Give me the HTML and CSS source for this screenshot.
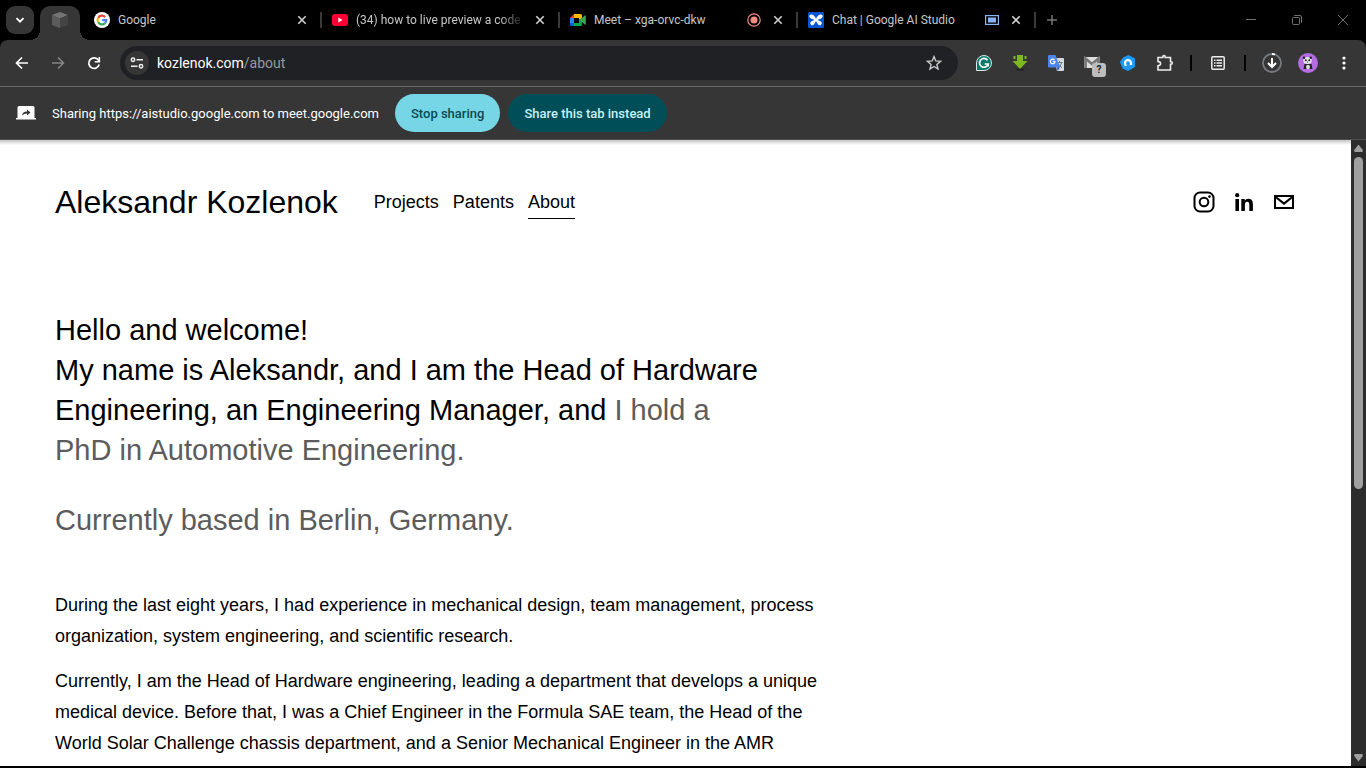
FILE: index.html
```html
<!DOCTYPE html>
<html lang="en">
<head>
<meta charset="utf-8">
<meta name="viewport" content="width=device-width, initial-scale=1">
<title>About — Aleksandr Kozlenok</title>
<link rel="stylesheet" href="styles.css">
</head>
<body class="window">
<div class="tabstrip">
  <button class="tab-search" aria-label="Search tabs"><svg width="12" height="12" viewBox="0 0 12 12"><path d="M2.500 4.200 6 7.700l3.500-3.500" fill="none" stroke="#fff" stroke-width="1.900"/></svg></button>
  <div class="tab-active"><svg width="16" height="16" viewBox="0 0 16 16"><path d="M8 0l8 3-8 3.500L0 3z" fill="#747474"/><path d="M0 3l8 3.500V16l-8-3z" fill="#5c5c5c"/><path d="M16 3L8 6.500V16l8-3z" fill="#444"/></svg></div>
  <div class="tab">
    <svg width="16" height="16" viewBox="0 0 16 16"><circle cx="8" cy="8" r="8" fill="#fff"/><g fill="none" stroke-width="2.200"><path d="M4.200 5.800A4.400 4.400 0 0 1 11.200 4.900" stroke="#ea4335"/><path d="M4.200 5.800a4.400 4.400 0 0 0 0 4.400" stroke="#fbbc05"/><path d="M4.200 10.200a4.400 4.400 0 0 0 6.600 1.200" stroke="#34a853"/><path d="M10.800 11.400A4.400 4.400 0 0 0 12.400 8.100H8.100" stroke="#4285f4"/></g></svg>
    <span class="tab-title">Google</span>
    <button class="tab-close" aria-label="Close tab"><svg width="10" height="10" viewBox="0 0 10 10"><path d="M1.300 1.300l7.400 7.400M8.700 1.300L1.300 8.700" stroke="#d0d0d0" stroke-width="1.600"/></svg></button>
  </div>
  <div class="tab">
    <svg width="16" height="16" viewBox="0 0 16 16"><rect y="2" width="16" height="12" rx="3" fill="#ff0033"/><path d="M6.300 5.500v5L10.600 8z" fill="#fff"/></svg>
    <span class="tab-title tab-title-fade">(34) how to live preview a code</span>
    <button class="tab-close" aria-label="Close tab"><svg width="10" height="10" viewBox="0 0 10 10"><path d="M1.300 1.300l7.400 7.400M8.700 1.300L1.300 8.700" stroke="#d0d0d0" stroke-width="1.600"/></svg></button>
  </div>
  <div class="tab">
    <svg width="16" height="16" viewBox="0 0 16 16"><path d="M0 6l4-4v4z" fill="#ea4335"/><path d="M0 6h4v5H0z" fill="#2684fc"/><path d="M0 11h4v3H1.200Q0 14 0 12.800z" fill="#0066da"/><path d="M4 2h6.500Q12 2 12 3.500V6L9 8V6H4z" fill="#ffba00"/><path d="M4 11h5V8l3-2.500v7Q12 14 10.500 14H4z" fill="#00ac47"/><path d="M12 6l3-2.700q.8-.4.8.5v8.400q0 .9-.8.500L12 10 9 8z" fill="#34a853"/></svg>
    <span class="tab-title">Meet – xga-orvc-dkw</span>
    <svg class="tab-state" width="14" height="14" viewBox="0 0 14 14"><circle cx="7" cy="7" r="6.200" fill="none" stroke="#f28b82" stroke-width="1.200"/><circle cx="7" cy="7" r="3.500" fill="#f28b82"/></svg>
    <button class="tab-close" aria-label="Close tab"><svg width="10" height="10" viewBox="0 0 10 10"><path d="M1.300 1.300l7.400 7.400M8.700 1.300L1.300 8.700" stroke="#d0d0d0" stroke-width="1.600"/></svg></button>
  </div>
  <div class="tab">
    <svg width="16" height="16" viewBox="0 0 16 16"><rect width="16" height="16" rx="1.500" fill="#0a56d0"/><g fill="#fff"><path d="M1.200 3.800Q3 1.600 5.500 3.200 7.500 4.600 8 7 8.500 4.600 10.500 3.200 13 1.600 14.800 3.800 14.500 6.500 11 7.300L9.500 8q2 .4 3.700 1.800a2 2 0 1 1-3 2.700Q9 11 8 9 7 11 5.800 12.500a2 2 0 1 1-3-2.700Q4.500 8.400 6.500 8L5 7.300Q1.500 6.500 1.200 3.800z"/></g></svg>
    <span class="tab-title">Chat | Google AI Studio</span>
    <svg class="tab-state" width="14" height="10" viewBox="0 0 14 10"><rect x=".6" y=".6" width="12.800" height="8.800" fill="none" stroke="#8ab4f8" stroke-width="1.200"/><rect x="3" y="2.500" width="8" height="5" fill="#8ab4f8"/></svg>
    <button class="tab-close" aria-label="Close tab"><svg width="10" height="10" viewBox="0 0 10 10"><path d="M1.300 1.300l7.400 7.400M8.700 1.300L1.300 8.700" stroke="#d0d0d0" stroke-width="1.600"/></svg></button>
  </div>
  <button class="new-tab" aria-label="New tab"><svg width="10" height="10" viewBox="0 0 10 10"><path d="M5 0v10M0 5h10" stroke="#777" stroke-width="1.500"/></svg></button>
  <div class="window-controls">
    <button aria-label="Minimize"><svg width="10" height="10" viewBox="0 0 10 10"><path d="M0 4.500h10" stroke="#707070"/></svg></button>
    <button aria-label="Restore"><svg width="10" height="10" viewBox="0 0 10 10"><path d="M2.500 1V.5h5.500q1.500 0 1.500 1.500v5.500H9" fill="none" stroke="#707070"/><rect x=".5" y="2.500" width="7" height="7" rx=".8" fill="none" stroke="#707070"/></svg></button>
    <button aria-label="Close"><svg width="10" height="10" viewBox="0 0 10 10"><path d="M0 0l10 10M10 0L0 10" stroke="#707070"/></svg></button>
  </div>
</div>

<div class="toolbar">
  <button class="tool" aria-label="Back"><svg width="14" height="14" viewBox="0 0 14 14"><path d="M13 7H2M7 1.500L1.500 7 7 12.500" fill="none" stroke="#fff" stroke-width="1.700"/></svg></button>
  <button class="tool" aria-label="Forward"><svg width="14" height="14" viewBox="0 0 14 14"><path d="M1 7h11M7 1.500L12.500 7 7 12.500" fill="none" stroke="#858585" stroke-width="1.500"/></svg></button>
  <button class="tool" aria-label="Reload"><svg width="14" height="14" viewBox="0 0 14 14"><path d="M12.200 8.500A5.300 5.300 0 1 1 11.400 4L12.800 5.500" fill="none" stroke="#fff" stroke-width="1.700"/><path d="M12.300 1v4.800H7.800" fill="none" stroke="#fff" stroke-width="1.600"/></svg></button>
  <div class="omnibox">
    <button class="site-info" aria-label="View site information"><svg width="14" height="12" viewBox="0 0 14 12"><g fill="none" stroke="#eee" stroke-width="1.500"><circle cx="3" cy="2.800" r="1.700"/><path d="M6.500 2.800H13M1 9.200h6.500"/><circle cx="11" cy="9.200" r="1.700"/></g></svg></button>
    <a class="address" href="#">kozlenok.com<span class="address-path">/about</span></a>
    <button class="bookmark" aria-label="Bookmark this tab"><svg width="16" height="16" viewBox="0 0 16 16"><path d="M8 1.600l1.800 4.300 4.700.4-3.600 3.100 1.100 4.600L8 11.500 4 14l1.100-4.600L1.500 6.300l4.700-.4z" fill="none" stroke="#ccc" stroke-width="1.400"/></svg></button>
  </div>
  <button class="tool" aria-label="Grammarly"><svg width="16" height="16" viewBox="0 0 16 16"><path d="M.5 15.500V8A7.500 7.500 0 1 1 8 15.500z" fill="#08786a" stroke="#d8e8e4"/><path d="M11.500 5.200A4.400 4.400 0 1 0 12.200 9H8.700M12.200 9v2.600" fill="none" stroke="#fff" stroke-width="1.700"/></svg></button>
  <button class="tool" aria-label="Downloader"><svg width="16" height="16" viewBox="0 0 16 16"><ellipse cx="8" cy="14.500" rx="4" ry="1.200" fill="#222"/><path d="M5 0h6v6h4.500L8 14 .5 6H5z" fill="#7db81e"/><path d="M1.500 1h2v3h-2zM12.500 1h2v3h-2z" fill="#7db81e"/></svg></button>
  <button class="tool" aria-label="Translate"><svg width="16" height="16" viewBox="0 0 16 16"><path d="M6 3h9q1 0 1 1v11q0 1-1 1H9z" fill="#d5d8dc"/><path d="M8.500 7.500h6M11.500 6v1.500M13.500 8q-1 4-4 5M10 8.500q1.500 3 4 4" fill="none" stroke="#607d8b" stroke-width="1"/><path d="M1 0h6.500l4.500 12.500H1q-1 0-1-1V1q0-1 1-1z" fill="#4a86ee"/><path d="M9 12.500h3L9.500 16z" fill="#2a56c6"/><path d="M6.500 5A2.300 2.300 0 1 0 7 6.700H4.900" fill="none" stroke="#fff" stroke-width="1.200"/></svg></button>
  <button class="tool mail-tool" aria-label="Mail checker"><svg width="16" height="16" viewBox="0 0 16 16"><rect y="2" width="16" height="11" fill="#ddd"/><path d="M1.500 13V3.500L8 9l6.500-5.500V13" fill="none" stroke="#777" stroke-width="2.800"/></svg><span class="mail-badge">?</span></button>
  <button class="tool" aria-label="Extension"><svg width="16" height="16" viewBox="0 0 16 16"><path d="M8.500 0L15 3.500V12L8 16 2.500 13.500 0 7 3 2.500z" fill="#1a9af5"/><path d="M5.800 11L5 8.500a3 3 0 0 1 6-.8v2.300" fill="none" stroke="#fff" stroke-width="2.200"/></svg></button>
  <button class="tool tool-extensions" aria-label="Extensions"><svg width="18" height="18" viewBox="0 0 18 18"><path d="M2 3.500h4.800V2.800a1.200 1.200 0 0 1 2.400 0v.7H14.500v4.300h.6a1.200 1.200 0 0 1 0 2.400h-.6V16H2v-4.200q2.600-.3 2.600-2.200T2 7.500z" fill="none" stroke="#eee" stroke-width="1.600"/></svg></button>
  <span class="tool-divider"></span>
  <button class="tool" aria-label="Reading list"><svg width="14" height="14" viewBox="0 0 14 14"><rect x=".8" y=".8" width="12.400" height="12.400" rx="1" fill="none" stroke="#eee" stroke-width="1.500"/><path d="M3 4.300h1.500M5.500 4.300H11M3 7h1.500M5.500 7H11M3 9.700h1.500M5.500 9.700H11" stroke="#eee" stroke-width="1.400"/></svg></button>
  <span class="tool-divider"></span>
  <button class="tool" aria-label="Downloads"><svg width="20" height="20" viewBox="0 0 20 20"><circle cx="10" cy="10" r="9" fill="none" stroke="#777c80" stroke-width="1.800"/><path d="M10 1a9 9 0 0 1 3 .5" fill="none" stroke="#fff" stroke-width="1.800"/><path d="M10 5v9M6 10l4 4 4-4" fill="none" stroke="#fff" stroke-width="2"/></svg></button>
  <button class="tool" aria-label="Profile"><svg width="20" height="20" viewBox="0 0 20 20"><circle cx="10" cy="10" r="10" fill="#b56ce2"/><path d="M6.500 11h7l1 5h-9z" fill="#222"/><ellipse cx="10" cy="14" rx="2" ry="2.300" fill="#ddd"/><ellipse cx="9.500" cy="7.500" rx="4.200" ry="3.500" fill="#e8e8e8"/><g fill="#222"><circle cx="6" cy="4.700" r="1.200"/><circle cx="12.800" cy="4.700" r="1.200"/><circle cx="7.800" cy="7.300" r="1"/><circle cx="11.200" cy="7.300" r="1"/><circle cx="9.500" cy="9" r=".6"/></g></svg></button>
  <button class="tool" aria-label="Menu"><svg width="4" height="14" viewBox="0 0 4 14"><g fill="#fff"><circle cx="2" cy="2" r="1.600"/><circle cx="2" cy="7" r="1.600"/><circle cx="2" cy="12" r="1.600"/></g></svg></button>
</div>

<div class="sharebar">
  <svg width="20" height="14" viewBox="0 0 20 14"><path d="M3 0h14q1.500 0 1.500 1.500V12H20v1.500H0V12h1.500V1.500Q1.500 0 3 0z" fill="#fff"/><path d="M6 9.500q.5-4 5-4V3.500L14.500 6.500 11 9.500v-2q-3 0-5 2z" fill="#363636"/></svg>
  <span class="share-text">Sharing https://aistudio.google.com to meet.google.com</span>
  <div class="share-actions">
    <button class="share-button share-stop">Stop sharing</button>
    <button class="share-button share-switch">Share this tab instead</button>
  </div>
</div>

<div class="viewport">
  <div class="page">
    <header class="site-header">
      <a class="site-title" href="#">Aleksandr Kozlenok</a>
      <nav class="site-nav">
        <a href="#">Projects</a>
        <a href="#">Patents</a>
        <a class="current" href="#">About</a>
      </nav>
      <div class="social">
        <a href="#" aria-label="Instagram"><svg width="22" height="22" viewBox="0 0 22 22"><rect x="1.500" y="1.500" width="19" height="19" rx="5.500" fill="none" stroke="#000" stroke-width="2"/><circle cx="11" cy="11" r="4.300" fill="none" stroke="#000" stroke-width="2"/><circle cx="16.500" cy="5.600" r="1.300"/></svg></a>
        <a href="#" aria-label="LinkedIn"><svg width="18" height="18" viewBox="0 0 18 18"><circle cx="2.200" cy="2.200" r="2.100"/><path d="M.4 6h3.600v12H.4zM6.300 6h3.400v1.600q1.100-1.900 3.600-1.900 4.600 0 4.600 5.300v7h-3.600v-6.300q0-2.900-2-2.900-2.400 0-2.400 3V18H6.300z"/></svg></a>
        <a href="#" aria-label="Email"><svg width="22" height="16" viewBox="0 0 22 16"><path d="M2 2h18v12H2z" fill="none" stroke="#000" stroke-width="2"/><path d="M2 2.500l9 7 9-7" fill="none" stroke="#000" stroke-width="2.200"/></svg></a>
      </div>
    </header>
    <main class="about">
      <h1 class="intro">Hello and welcome!<br>My name is Aleksandr, and I am the Head of Hardware Engineering, an Engineering Manager, and <span class="muted">I hold a PhD in Automotive Engineering.</span></h1>
      <p class="intro muted">Currently based in Berlin, Germany.</p>
      <div class="bio">
        <p>During the last eight years, I had experience in mechanical design, team management, process organization, system engineering, and scientific research.</p>
        <p>Currently, I am the Head of Hardware engineering, leading a department that develops a unique medical device. Before that, I was a Chief Engineer in the Formula SAE team, the Head of the World Solar Challenge chassis department, and a Senior Mechanical Engineer in the AMR</p>
      </div>
    </main>
  </div>
  <div class="scrollbar">
    <svg width="9" height="8" viewBox="0 0 9 8"><path d="M4.500.5L8.800 6Q9 8 8 8H1Q0 8 .2 6z" fill="#9f9f9f"/></svg>
    <div class="scroll-track"><div class="scroll-thumb"></div></div>
    <svg width="9" height="8" viewBox="0 0 9 8"><path d="M4.500 7.500L8.800 2Q9 0 8 0H1Q0 0 .2 2z" fill="#9f9f9f"/></svg>
  </div>
</div>
</body>
</html>
```
FILE: styles.css
```css
* {
  box-sizing: border-box;
}

.window {
  display: flex;
  flex-direction: column;
  height: 100vh;
  margin: 0;
  overflow: hidden;
  background: #000;
  color: #fff;
  font-family: Roboto, "Open Sans", sans-serif;
  font-size: 12px;
}

button {
  display: flex;
  align-items: center;
  justify-content: center;
  padding: 0;
  border: 0;
  background: none;
  color: inherit;
  font: inherit;
}

a {
  color: inherit;
  text-decoration: none;
}

svg {
  display: block;
  flex: none;
}

/* Tab strip */
.tabstrip {
  display: flex;
  align-items: center;
  height: 40px;
  padding-left: 6px;
}

.tab-search {
  flex: none;
  width: 28px;
  height: 28px;
  border-radius: 9px;
  background: #363636;
}

.tab-active {
  position: relative;
  display: flex;
  flex: none;
  align-items: center;
  align-self: flex-end;
  justify-content: center;
  width: 40px;
  height: 34px;
  margin: 0 4px 0 6px;
  padding-bottom: 6px;
  border-radius: 10px 10px 0 0;
  background: #363636;
}

.tab-active::before,
.tab-active::after {
  content: "";
  position: absolute;
  bottom: 0;
  width: 10px;
  height: 10px;
}

.tab-active::before {
  right: 100%;
  background: radial-gradient(circle at 0 0, transparent 10px, #363636 10px);
}

.tab-active::after {
  left: 100%;
  background: radial-gradient(circle at 100% 0, transparent 10px, #363636 10px);
}

.tab {
  display: flex;
  flex: 0 1 238px;
  align-items: center;
  gap: 8px;
  min-width: 0;
  height: 16px;
  padding: 0 11px 0 10px;
  border-right: 2px solid #3a3a3a;
  color: #c7c7c7;
}

.tab-title {
  flex: 1;
  min-width: 0;
  overflow: hidden;
  line-height: 16px;
  white-space: nowrap;
}

.tab-title-fade {
  mask-image: linear-gradient(to right, #000 85%, transparent);
}

.tab-state {
  margin-right: 2px;
}

.tab-close {
  width: 14px;
  height: 16px;
}

.new-tab {
  flex: none;
  width: 32px;
  height: 28px;
}

.window-controls {
  display: flex;
  margin-left: auto;
}

.window-controls button {
  width: 46px;
  height: 40px;
}

/* Toolbar */
.toolbar {
  display: flex;
  align-items: center;
  height: 47px;
  padding: 0 4px;
  border-bottom: 1px solid #686868;
  border-radius: 8px 8px 0 0;
  background: #363636;
}

.tool {
  flex: none;
  width: 36px;
  height: 34px;
}

.omnibox {
  display: flex;
  flex: 1;
  align-items: center;
  height: 34px;
  margin: 0 8px;
  padding: 0 16px 0 5px;
  border-radius: 17px;
  background: #202124;
}

.site-info {
  width: 24px;
  height: 24px;
  border-radius: 50%;
  background: #363636;
}

.address {
  flex: 1;
  margin-left: 8px;
  font-size: 14px;
}

.address-path {
  color: #969a9f;
}

.mail-tool {
  position: relative;
}

.mail-badge {
  position: absolute;
  right: 4px;
  bottom: 3px;
  width: 14px;
  height: 14px;
  border-radius: 3px;
  background: #bdbdbd;
  color: #222;
  font-size: 10px;
  font-weight: 700;
  line-height: 14px;
}

.tool-extensions {
  padding-left: 2px;
}

.tool-divider {
  flex: none;
  width: 2px;
  height: 16px;
  margin: 0 8px;
  background: #000;
}

/* Screen sharing bar */
.sharebar {
  display: flex;
  align-items: center;
  height: 53px;
  padding: 0 16px;
  border-bottom: 1px solid #4c4f50;
  background: #363636;
  font-size: 13px;
}

.share-text {
  margin: 0 16px;
}

.share-actions {
  display: flex;
  gap: 8px;
}

.share-button {
  height: 38px;
  padding: 0 16px;
  border-radius: 19px;
  font-weight: 500;
}

.share-stop {
  background: #76d6e6;
  color: #0b4a53;
}

.share-switch {
  background: #004f58;
  color: #c9eff5;
}

/* Web page */
.viewport {
  display: flex;
  flex: 1;
  min-height: 0;
  margin-bottom: 2px;
}

.page {
  flex: 1;
  overflow: hidden;
  padding: 0 56px 0 55px;
  background: linear-gradient(#c4c4c4, #fff 5px);
  color: #000;
  font-family: "Liberation Sans", Arial, sans-serif;
  font-size: 18px;
}

.site-header {
  display: flex;
  align-items: center;
  height: 124px;
}

.site-title {
  font-size: 32px;
}

.site-nav {
  display: flex;
  gap: 14px;
  margin-left: 36px;
}

.site-nav a {
  padding: 5px 0;
  line-height: 22px;
  border-bottom: 1px solid transparent;
}

.site-nav .current {
  border-color: #000;
}

.social {
  display: flex;
  align-items: center;
  gap: 20px;
  margin-left: auto;
}

.about {
  max-width: 768px;
  padding-top: 46px;
}

.intro {
  max-width: 710px;
  margin: 0 0 30px;
  font-size: 29px;
  font-weight: 400;
  line-height: 40px;
}

.muted {
  color: #5c5c5c;
}

.bio {
  margin-top: 50px;
  line-height: 31px;
}

.bio p {
  margin: 0 0 14px;
}

/* Scrollbar */
.scrollbar {
  display: flex;
  flex: none;
  flex-direction: column;
  align-items: center;
  gap: 5px;
  width: 15px;
  padding: 4px 0;
  background: #2c2c2c;
}

.scroll-track {
  flex: 1;
  width: 9px;
}

.scroll-thumb {
  height: 56%;
  border-radius: 5px;
  background: #9f9f9f;
}
```
